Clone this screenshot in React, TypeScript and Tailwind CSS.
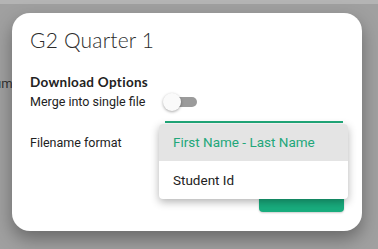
import { FunctionComponent } from "react";

const App: FunctionComponent = () => {
  return (
    <div className="relative w-[378px] h-[249px] overflow-hidden bg-[#a0a0a0] font-['Roboto',sans-serif]">
      {/* page behind the overlay */}
      <div className="h-[4px] bg-[#b4b4b4]" />
      <div className="absolute left-[-6px] top-[74px] text-[13px] text-[#333]">um</div>

      {/* dialog */}
      <div className="relative ml-[12px] mt-[9px] w-[350px] h-[218px] rounded-[18px] bg-white shadow-[0_8px_18px_rgba(0,0,0,0.35)] pt-[14px] pl-[18px] pr-[18px]">
        <h1 className="h-[26px] font-['Lato',sans-serif] font-light text-[21px] leading-[26px] text-[#2b2b2b] tracking-[0.2px]">
          G2 Quarter 1
        </h1>

        <div className="mt-[21px] h-[16px] font-['Lato',sans-serif] font-bold text-[13.5px] leading-[16px] text-[#222] tracking-[0.3px]">
          Download Options
        </div>

        <div className="flex items-center h-[22px] mt-[1px]">
          <span className="w-[135px] text-[12.5px] text-[#222]">Merge into single file</span>
          <div className="relative w-[32px] h-[10px] rounded-full bg-[#9b9b9b]">
            <div className="absolute left-[-2px] top-[-4px] w-[18px] h-[18px] rounded-full bg-[#fafafa] shadow-[0_1px_3px_rgba(0,0,0,0.35)]" />
          </div>
        </div>

        <div className="flex items-end h-[10px]">
          <div className="ml-[135px] w-[178px] h-[2px] bg-[#21a97a]" />
        </div>

        <div className="flex items-center h-[22px] mt-[9px]">
          <span className="text-[12.5px] text-[#222]">Filename format</span>
        </div>

        <div className="flex justify-end items-center gap-[33px] mt-[28px]">
          <span className="mb-[5px] text-[13px] text-[#555] uppercase tracking-[0.5px]">Cancel</span>
          <button className="w-[85px] h-[30px] pb-[5px] rounded-[4px] bg-[#19ad7e] text-white text-[13px] uppercase tracking-[0.5px] shadow-[0_1px_2px_rgba(0,0,0,0.2)]">
            Continue
          </button>
        </div>

        {/* dropdown menu */}
        <div className="absolute left-[147px] top-[111px] w-[189px] rounded-[4px] bg-white shadow-[0_3px_8px_rgba(0,0,0,0.3)] overflow-hidden">
          <div className="h-[37px] flex items-center px-[14px] bg-[#e4e4e4] text-[13.5px] text-[#22a77a]">
            First Name - Last Name
          </div>
          <div className="h-[38px] flex items-center px-[14px] text-[13.5px] text-[#222]">
            Student Id
          </div>
        </div>
      </div>
    </div>
  );
};

export default App;
